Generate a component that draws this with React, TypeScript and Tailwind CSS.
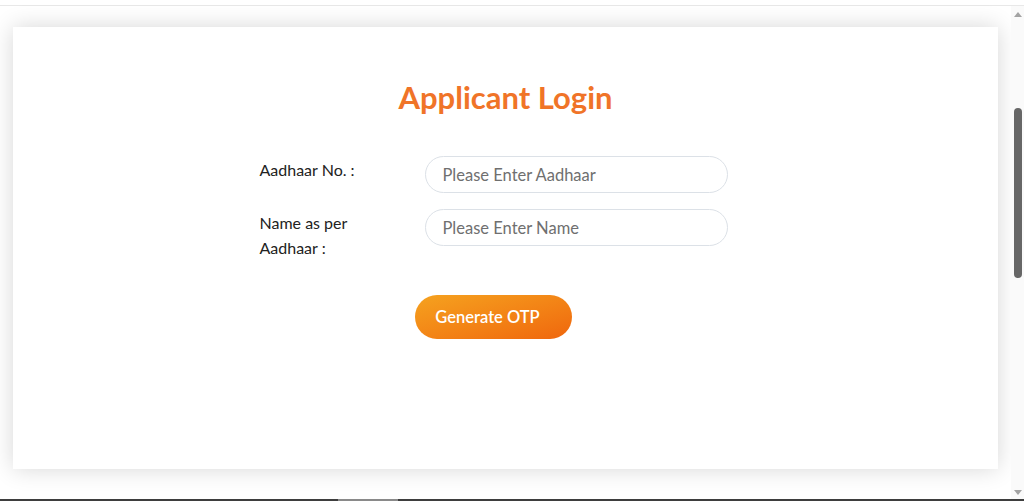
import React from "react"

const font = { fontFamily: '"Lato", "Noto Sans", sans-serif' }

function Field({
  label,
  placeholder,
}: {
  label: React.ReactNode
  placeholder: string
}) {
  return (
    <div className="flex items-start">
      <label className="w-[165px] pt-px text-[16px] leading-[25px] text-[#222]">
        {label}
      </label>
      <input
        type="text"
        placeholder={placeholder}
        className="h-[37px] w-[303px] rounded-full border border-[#dce1e7] bg-white px-[17px] text-[16.5px] text-[#333] outline-none placeholder:text-[#6f6f6f]"
        style={font}
      />
    </div>
  )
}

function Scrollbar() {
  return (
    <div className="flex w-[13px] flex-col items-center bg-[#fafafa]">
      <div className="mt-[6px] h-0 w-0 border-x-[4px] border-b-[5px] border-x-transparent border-b-[#a3a3a3]" />
      <div className="mt-[91px] h-[170px] w-[8px] rounded-full bg-[#676767]" />
      <div className="mt-auto mb-[4px] h-0 w-0 border-x-[4px] border-t-[5px] border-x-transparent border-t-[#a3a3a3]" />
    </div>
  )
}

export default function App() {
  return (
    <div
      className="flex h-[501px] w-[1024px] flex-col overflow-hidden bg-white"
      style={font}
    >
      <div className="mt-[5px] h-px bg-[#e8e8e8]" />
      <div className="flex flex-1">
        <main className="flex-1 px-[13px] pt-[21px]">
          <div className="flex h-[442px] flex-col items-center bg-white pt-[52px] shadow-[0_0_22px_rgba(0,0,0,0.16)]">
            <h1 className="text-[31px] font-bold leading-[36px] text-[#f07428]">
              Applicant Login
            </h1>
            <form
              className="mt-[41px] mr-[24px] flex w-[468px] flex-col gap-4"
              onSubmit={(e) => e.preventDefault()}
            >
              <Field label="Aadhaar No. :" placeholder="Please Enter Aadhaar" />
              <Field
                label={
                  <>
                    Name as per
                    <br />
                    Aadhaar :
                  </>
                }
                placeholder="Please Enter Name"
              />
              <div className="mt-[19px] flex justify-center">
                <button
                  type="submit"
                  className="h-[44px] w-[157px] rounded-full bg-linear-to-br from-[#f5a21f] to-[#ef660d] pr-[12px] text-[16.5px] font-semibold text-white"
                >
                  Generate OTP
                </button>
              </div>
            </form>
          </div>
        </main>
        <Scrollbar />
      </div>
      <div className="flex h-[2px] bg-[#3e3e3e]">
        <div className="ml-[338px] w-[60px] bg-[#8a8a8a]" />
      </div>
    </div>
  )
}
